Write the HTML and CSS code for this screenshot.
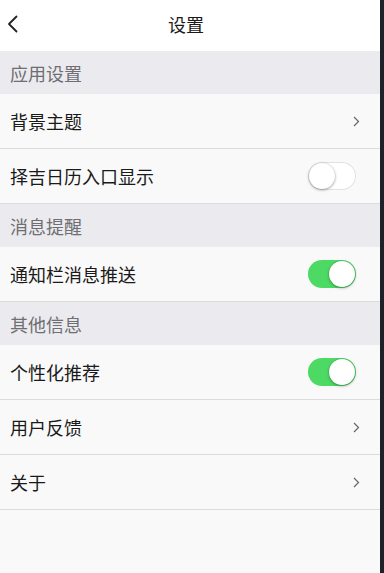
FILE: index.html
```html
<!DOCTYPE html>
<html lang="zh-CN">
<head>
<meta charset="utf-8">
<link rel="stylesheet" href="styles.css">
</head>
<body>
<div class="screen">
  <div class="page">
    <header class="topbar">
      <span class="back">
        <svg width="12" height="18" viewBox="0 0 12 18"><path d="M9.5 1.5 L2 9 L9.5 16.5" fill="none" stroke="#222" stroke-width="1.8" stroke-linecap="round" stroke-linejoin="round"/></svg>
      </span>
      <h1 class="title">设置</h1>
    </header>

    <div class="section">应用设置</div>
    <div class="row"><span class="label">背景主题</span><span class="chev"><svg width="7" height="11" viewBox="0 0 7 11"><path d="M1 1 L5.5 5.5 L1 10" fill="none" stroke="#666" stroke-width="1.2"/></svg></span></div>
    <div class="row"><span class="label">择吉日历入口显示</span><span class="toggle"><span class="knob"></span></span></div>

    <div class="section">消息提醒</div>
    <div class="row"><span class="label">通知栏消息推送</span><span class="toggle on"><span class="knob"></span></span></div>

    <div class="section">其他信息</div>
    <div class="row"><span class="label">个性化推荐</span><span class="toggle on"><span class="knob"></span></span></div>
    <div class="row"><span class="label">用户反馈</span><span class="chev"><svg width="7" height="11" viewBox="0 0 7 11"><path d="M1 1 L5.5 5.5 L1 10" fill="none" stroke="#666" stroke-width="1.2"/></svg></span></div>
    <div class="row"><span class="label">关于</span><span class="chev"><svg width="7" height="11" viewBox="0 0 7 11"><path d="M1 1 L5.5 5.5 L1 10" fill="none" stroke="#666" stroke-width="1.2"/></svg></span></div>
  </div>
  <div class="edge"></div>
</div>
</body>
</html>
```
FILE: styles.css
```css
html, body {
  margin: 0;
  padding: 0;
  height: 100%;
}
body {
  font-family: "Noto Sans CJK SC", "Noto Sans", sans-serif;
  background: #1e2228;
}
.screen {
  display: flex;
  width: 384px;
  height: 573px;
}
.page {
  width: 380px;
  height: 573px;
  background: #f9f9f9;
  display: flex;
  flex-direction: column;
}
.edge {
  width: 4px;
  background: #1e2228;
}
.topbar {
  height: 51px;
  background: #ffffff;
  display: flex;
  align-items: center;
  justify-content: center;
  position: relative;
}
.back {
  position: absolute;
  left: 7px;
  top: 15px;
  display: flex;
}
.title {
  margin: 0 8px 3px 0;
  font-size: 18px;
  font-weight: 400;
  color: #1a1a1a;
  line-height: 1;
}
.section {
  height: 43px;
  background: #ebebef;
  display: flex;
  align-items: center;
  padding-left: 10px;
  font-size: 18px;
  color: #6e6e73;
}
.row {
  height: 54px;
  border-bottom: 1px solid #dcdcdc;
  background: #f9f9f9;
  display: flex;
  align-items: center;
  justify-content: space-between;
  padding: 0 24px 0 10px;
  font-size: 18px;
  color: #1a1a1a;
}
.chev {
  display: flex;
  margin-right: -4px;
}
.toggle {
  width: 48px;
  height: 28px;
  border-radius: 14px;
  background: #ffffff;
  box-shadow: inset 0 0 0 1px #e2e2e2;
  display: flex;
  align-items: center;
}
.knob {
  width: 26px;
  height: 26px;
  border-radius: 50%;
  background: #ffffff;
  margin-left: 1px;
  box-shadow: 0 1px 3px rgba(0,0,0,0.35), 0 0 0 0.5px rgba(0,0,0,0.08);
}
.toggle.on {
  background: #4cd964;
  box-shadow: none;
  justify-content: flex-end;
}
.toggle.on .knob {
  margin-left: 0;
  margin-right: 1px;
}
```
